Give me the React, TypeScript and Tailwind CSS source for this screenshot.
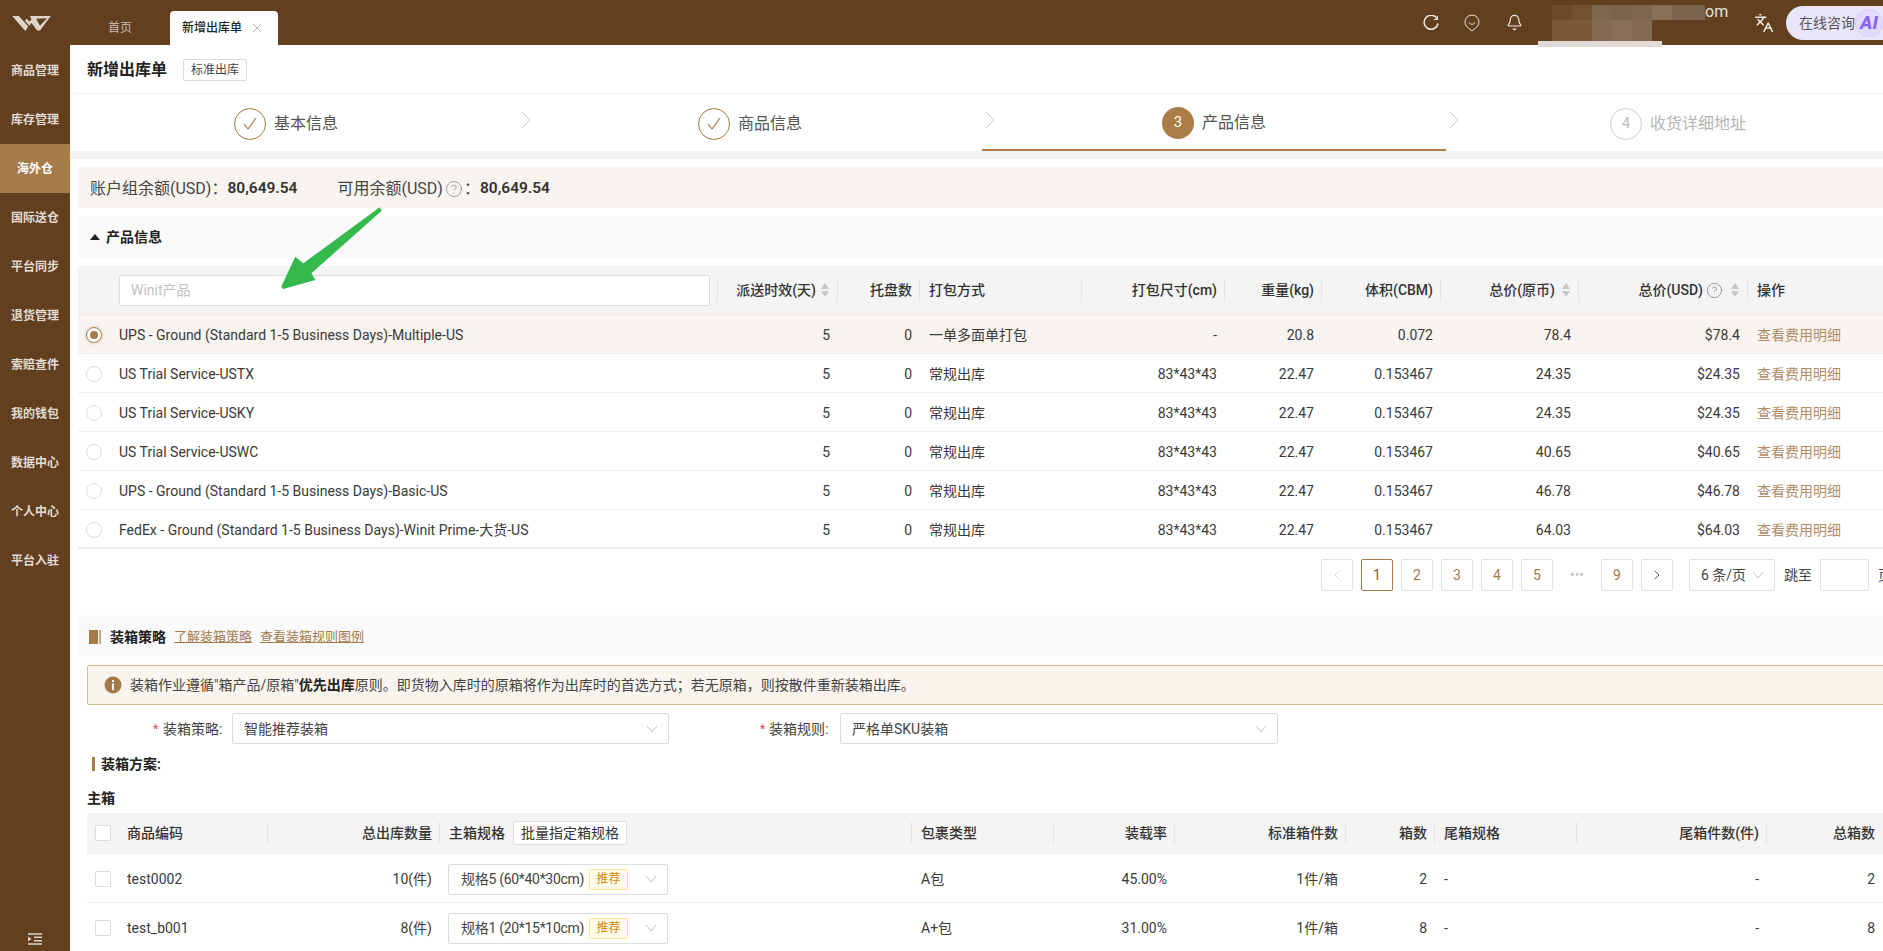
import React from "react";
import { Bell, CircleHelp, Languages, X, ChevronLeft, ChevronRight } from "lucide-react";

const font = "font-['Roboto','Noto_Sans_CJK_SC',sans-serif]";
const menu = ["商品管理", "库存管理", "海外仓", "国际送仓", "平台同步", "退货管理", "索赔查件", "我的钱包", "数据中心", "个人中心", "平台入驻"];

function Sort() {
  return (
    <svg width="8" height="14" viewBox="0 0 8 14" className="shrink-0">
      <path d="M4 0 8 6H0Z" fill="#c8c8c8" />
      <path d="M4 14 0 8h8Z" fill="#c8c8c8" />
    </svg>
  );
}

function Chevron({ className = "" }: { className?: string }) {
  return (
    <svg width="12" height="8" viewBox="0 0 12 8" fill="none" className={className}>
      <path d="M1 1l5 6 5-6" stroke="#c4c4c4" strokeWidth="1" />
    </svg>
  );
}

function Step({ n, label, state, first }: { n: number; label: string; state: "done" | "active" | "todo"; first?: boolean }) {
  return (
    <div className={`relative flex items-center justify-center gap-2 ${first ? "pr-4" : ""} ${state === "active" ? "border-b-2 border-[#b07d45] pt-[2px]" : "pt-[2px]"}`}>
      {state === "done" && (
        <span className="flex h-8 w-8 items-center justify-center rounded-full border border-[#a57a4a]">
          <svg width="16" height="14" viewBox="0 0 16 14" fill="none"><path d="M2 7l4 5 8-11" stroke="#a57a4a" strokeWidth="1.2" /></svg>
        </span>
      )}
      {state === "active" && <span className="flex h-8 w-8 items-center justify-center rounded-full bg-[#ab7d48] text-[15px] text-white">{n}</span>}
      {state === "todo" && <span className="flex h-8 w-8 items-center justify-center rounded-full border border-[#cfcfcf] text-[15px] text-[#bdbdbd]">{n}</span>}
      <span className={`text-base ${state === "todo" ? "text-[#b5b5b5]" : "text-[#555]"}`}>{label}</span>
      {n < 4 && (
        <svg width="10" height="18" viewBox="0 0 10 18" fill="none" className="absolute right-[-13px] top-[17px]">
          <path d="M1 1l8 8-8 8" stroke="#c8c8c8" strokeWidth="1" />
        </svg>
      )}
    </div>
  );
}

const hcell = "relative flex items-center px-2 after:absolute after:right-0 after:top-[13px] after:bottom-[12px] after:w-px after:bg-[#e4e4e4]";
const hcell2 = "relative flex items-center px-2 after:absolute after:right-0 after:top-[9px] after:bottom-[9px] after:w-px after:bg-[#e4e4e4]";
const grid1 = "grid grid-cols-[640px_120px_82px_162px_143px_97px_119px_138px_169px_135px]";
const grid2 = "grid grid-cols-[181px_172px_472px_142px_121px_171px_89px_142px_190px_116px]";

const rows = [
  ["UPS - Ground (Standard 1-5 Business Days)-Multiple-US", "一单多面单打包", "-", "20.8", "0.072", "78.4", "$78.4"],
  ["US Trial Service-USTX", "常规出库", "83*43*43", "22.47", "0.153467", "24.35", "$24.35"],
  ["US Trial Service-USKY", "常规出库", "83*43*43", "22.47", "0.153467", "24.35", "$24.35"],
  ["US Trial Service-USWC", "常规出库", "83*43*43", "22.47", "0.153467", "40.65", "$40.65"],
  ["UPS - Ground (Standard 1-5 Business Days)-Basic-US", "常规出库", "83*43*43", "22.47", "0.153467", "46.78", "$46.78"],
  ["FedEx - Ground (Standard 1-5 Business Days)-Winit Prime-大货-US", "常规出库", "83*43*43", "22.47", "0.153467", "64.03", "$64.03"],
];

const boxes = [
  ["test0002", "10(件)", "规格5 (60*40*30cm)", "A包", "45.00%", "2"],
  ["test_b001", "8(件)", "规格1 (20*15*10cm)", "A+包", "31.00%", "8"],
];

function PageBtn({ children, active, link }: { children: React.ReactNode; active?: boolean; link?: boolean }) {
  return (
    <span className={`flex h-8 w-8 items-center justify-center rounded-[2px] border text-sm ${active ? "border-[#a57a4a] text-[#8a5f30]" : "border-[#e2e2e2]"} ${link ? "text-[#a57a4a]" : ""}`}>{children}</span>
  );
}

function Select({ className, children }: { className: string; children: React.ReactNode }) {
  return (
    <div className={`flex h-[31px] items-center justify-between rounded-[2px] border border-[#dcdcdc] bg-white pr-[10px] text-sm text-[#444] ${className}`}>
      {children}
      <Chevron />
    </div>
  );
}

export default function App() {
  return (
    <div className={`relative flex h-[951px] w-full overflow-hidden bg-white text-sm text-[#3a3a3a] ${font}`}>
      <aside className="flex h-full w-[70px] shrink-0 flex-col bg-[#613f1f]">
        <div className="flex h-[46px] shrink-0 items-center justify-center pr-[7px]">
          <svg width="41" height="16" viewBox="0 0 41 17" fill="none">
            <path d="M0 1H7L17 12 14.500 16.500H13.500Z" fill="#ded5cb" />
            <path fillRule="evenodd" clipRule="evenodd" d="M19 1H41L29.500 16.500H26.500L20.500 8.500 18.300 11.500 13.500 6 15.500 4 18 7 20.500 5ZM25.500 4 29.500 11.500 37 3.500Z" fill="#ded5cb" />
          </svg>
        </div>
        {menu.map((m) => (
          <div key={m} className={`flex h-[49px] shrink-0 items-center justify-center text-xs font-semibold ${m === "海外仓" ? "bg-[#a67c4b] text-white" : "text-[#e2dbd3]"}`}>{m}</div>
        ))}
        <div className="mt-auto flex justify-center pb-[6px]">
          <svg width="14" height="12" viewBox="0 0 14 12" fill="none">
            <path d="M0 1h14M6 4.300h8M6 7.700h8M0 11h14" stroke="#ddd6ce" strokeWidth="1.500" />
            <path d="M0 3.500 3.500 6 0 8.500Z" fill="#ddd6ce" />
          </svg>
        </div>
      </aside>

      <div className="flex min-w-0 flex-1 flex-col">
        <header className="flex h-[45px] shrink-0 items-end bg-[#613f1f]">
          <div className="flex h-[34px] w-[100px] items-center justify-center text-xs text-[#c9bcae]">首页</div>
          <div className="flex h-[34px] w-[108px] items-center justify-between rounded-t-[4px] bg-white pl-3 pr-[14px] text-xs font-medium text-[#222]">
            新增出库单
            <X size={14} strokeWidth={1} className="text-[#777]" />
          </div>
          <div className="flex h-[45px] flex-1 items-center justify-end">
            <svg width="16" height="16" viewBox="0 0 16 16" fill="none" className="mr-[25px]">
              <path d="M14.200 3.800A7 7 0 1 0 15 8.500" stroke="#efe8e0" strokeWidth="1.500" />
              <path d="M14.500 1v3.500H11" stroke="#efe8e0" strokeWidth="1" />
            </svg>
            <svg width="16" height="18" viewBox="0 0 16 18" fill="none" className="mr-[26px]">
              <path d="M8 17 4.800 14.300A7 7 0 1 1 11.200 14.300Z" stroke="#e8e0d8" strokeWidth="1" />
              <path d="M5 8.500c1 2.200 5 2.200 6 0" stroke="#e8e0d8" strokeWidth="1" />
            </svg>
            <Bell size={17} strokeWidth={1.600} className="mr-[15px] text-[#f2ece6]" />
            <div className="relative mr-[36px] h-[45px] w-[180px]">
              <div className="absolute left-[14px] top-[5px] grid grid-cols-[20px_20px_20px_20px_20px_20px_33px] grid-rows-[15px_21px]">
                <span className="bg-[#6d4a28]" /><span className="bg-[#72512f]" /><span className="bg-[#7d6650]" /><span className="bg-[#7a644f]" /><span className="bg-[#7e6750]" /><span className="bg-[#886f58]" /><span className="bg-[#7b6450]" />
                <span className="bg-[#7d5a37]" /><span className="bg-[#7a5a39]" /><span className="bg-[#836a52]" /><span className="bg-[#866e58]" /><span className="bg-[#846a52]" />
              </div>
              <div className="absolute left-0 top-[41px] h-[6px] w-[124px] bg-[#dfdad6]" />
              <span className="absolute left-[167px] top-[2px] text-base leading-5 text-[#e8e0d8]">om</span>
            </div>
            <Languages size={20} strokeWidth={1.800} className="mr-[12px] text-[#f2ece6]" />
            <div className="relative -mr-[24px] flex h-[34px] w-[121px] items-center rounded-full bg-[#e8e5fb] pl-[13px] text-sm text-[#555]">
              在线咨询
              <span className="absolute left-[69px] top-[3px] h-7 w-7 rounded-full border border-[#dccdf6] bg-[#e2dbf9]" />
              <span className="relative ml-[5px] text-[19px] font-extrabold italic leading-none text-[#8a63ef]">AI</span>
            </div>
          </div>
        </header>

        <main className="min-h-0 flex-1 overflow-hidden">
          <div className="flex h-[49px] items-center border-b border-[#eeeeee] pl-[17px]">
            <span className="mt-[2px] text-base font-semibold text-[#222]">新增出库单</span>
            <span className="ml-4 mt-px flex h-[22px] w-[64px] items-center justify-center rounded-[2px] border border-[#dcdcdc] text-xs text-[#444]">标准出库</span>
          </div>
          <div className="grid h-[57px] grid-cols-[448px_464px_464px_464px]">
            <Step n={1} label="基本信息" state="done" first />
            <Step n={2} label="商品信息" state="done" />
            <Step n={3} label="产品信息" state="active" />
            <Step n={4} label="收货详细地址" state="todo" />
          </div>
          <div className="h-2 bg-[#f2f2f2]" />

          <div className="pl-2">
            <div className="mt-2 flex h-[41px] items-center bg-[#f9f4ef] pl-3 pt-[2px] text-base text-[#444]">
              账户组余额(USD)：<span className="text-[15.500px] font-semibold text-[#333]">80,649.54</span>
              <span className="ml-[40px]">可用余额(USD)</span>
              <CircleHelp size={18} strokeWidth={1} className="ml-[2px] text-[#888]" />
              <span className="ml-[1px]">：</span>
              <span className="text-[15.500px] font-semibold text-[#333]">80,649.54</span>
            </div>

            <div className="mt-2 flex h-[42px] items-center bg-[#fafafa] pl-3 font-semibold text-[#222]">
              <svg width="10" height="6" viewBox="0 0 10 6" className="mr-[6px]"><path d="M5 0l5 6H0Z" fill="#222" /></svg>
              产品信息
            </div>

            <div className="mt-2">
              <div className={`${grid1} h-[49px] border-b border-[#eeeeee] bg-[#f4f4f4] font-medium text-[#333]`}>
                <div className={`${hcell} pl-[41px] pr-[8px]`}>
                  <div className="flex h-[31px] w-full items-center rounded-[2px] border border-[#dcdcdc] bg-white px-[11px] font-normal text-[#bfbfbf]">Winit产品</div>
                </div>
                <div className={`${hcell} justify-end gap-[5px] pr-[9px]`}>派送时效(天)<Sort /></div>
                <div className={`${hcell} justify-end`}>托盘数</div>
                <div className={`${hcell} pl-[9px]`}>打包方式</div>
                <div className={`${hcell} justify-end`}>打包尺寸(cm)</div>
                <div className={`${hcell} justify-end`}>重量(kg)</div>
                <div className={`${hcell} justify-end`}>体积(CBM)</div>
                <div className={`${hcell} justify-end gap-[7px] pr-[9px]`}>总价(原币)<Sort /></div>
                <div className={`${hcell} justify-end pr-[9px]`}>
                  总价(USD)
                  <CircleHelp size={17} strokeWidth={1} className="ml-[3px] text-[#777]" />
                  <span className="ml-[8px]"><Sort /></span>
                </div>
                <div className="flex items-center pl-[9px]">操作</div>
              </div>
              {rows.map((r, i) => (
                <div key={r[0]} className={`${grid1} h-[39px] items-center border-b border-[#eeeeee] pt-[2px] ${i === 0 ? "bg-[#f9f4ef]" : ""} ${i === 5 ? "border-b-2" : ""}`}>
                  <div className="flex items-center pl-2">
                    {i === 0 ? (
                      <span className="flex h-4 w-4 items-center justify-center rounded-full border border-[#a57a4a] bg-white shadow-[0_0_0_2px_#f0e6dc]"><span className="h-2 w-2 rounded-full bg-[#a57a4a]" /></span>
                    ) : (
                      <span className="h-4 w-4 rounded-full border border-[#dcdcdc] bg-white" />
                    )}
                    <span className="ml-[17px]">{r[0]}</span>
                  </div>
                  <div className="px-2 text-right">5</div>
                  <div className="px-2 text-right">0</div>
                  <div className="px-2 pl-[9px]">{r[1]}</div>
                  <div className="px-2 text-right">{r[2]}</div>
                  <div className="px-2 text-right">{r[3]}</div>
                  <div className="px-2 text-right">{r[4]}</div>
                  <div className="px-2 text-right">{r[5]}</div>
                  <div className="px-2 text-right">{r[6]}</div>
                  <div className="pl-[9px] text-[#b08d68]">查看费用明细</div>
                </div>
              ))}
            </div>

            <div className="relative mt-[10px] flex h-8 w-[1860px] items-center pl-[1243px] text-[#a57a4a]">
              <div className="flex items-center gap-2">
                <PageBtn><ChevronLeft size={16} strokeWidth={1} className="text-[#c4c4c4]" /></PageBtn>
                <PageBtn active>1</PageBtn>
                <PageBtn link>2</PageBtn>
                <PageBtn link>3</PageBtn>
                <PageBtn link>4</PageBtn>
                <PageBtn link>5</PageBtn>
                <span className="flex w-8 justify-center text-[#c4c4c4]">•••</span>
                <PageBtn link>9</PageBtn>
                <PageBtn><ChevronRight size={16} strokeWidth={1.300} className="text-[#444]" /></PageBtn>
              </div>
              <div className="ml-4 flex h-8 w-[86px] items-center justify-between rounded-[2px] border border-[#e2e2e2] pl-[11px] pr-[10px] text-[#444]">6 条/页<Chevron /></div>
              <span className="ml-[9px] text-[#444]">跳至</span>
              <span className="ml-2 h-8 w-[49px] rounded-[2px] border border-[#e2e2e2]" />
              <span className="ml-[9px] text-[#444]">页</span>
            </div>

            <div className="mt-6 flex h-[42px] items-center bg-[#fafafa] pl-[11px] pt-[2px]">
              <svg width="12" height="14" viewBox="0 0 12 14" className="mr-[9px]"><path d="M0 0h9v14H0Z" fill="#a57a4a" /><path d="M10 0h2v14h-2Z" fill="#c7a988" /></svg>
              <span className="font-semibold text-[#222]">装箱策略</span>
              <a className="ml-2 text-[13px] text-[#a57a4a] underline">了解装箱策略</a>
              <a className="ml-2 text-[13px] text-[#a57a4a] underline">查看装箱规则图例</a>
            </div>

            <div className="ml-[9px] mt-2 flex h-[40px] w-[1850px] items-center rounded-[2px] border border-[#dbb98f] bg-[#faf4ef] pl-4">
              <svg width="18" height="18" viewBox="0 0 18 18" className="mr-2"><circle cx="9" cy="9" r="8.500" fill="#a57a4a" /><path d="M8 7.500h2V14H8Z M8 4h2v2H8Z" fill="#fff" /></svg>
              <span className="text-sm text-[#444]">装箱作业遵循"箱产品/原箱"<b className="font-semibold text-[#222]">优先出库</b>原则。即货物入库时的原箱将作为出库时的首选方式；若无原箱，则按散件重新装箱出库。</span>
            </div>

            <div className="mt-2 flex items-center">
              <span className="ml-[75px] w-[10px] text-xs text-[#e5484d]">*</span>
              <span className="w-[69px] text-[#444]">装箱策略:</span>
              <Select className="w-[437px] pl-[11px]">智能推荐装箱</Select>
              <span className="ml-[91px] w-[9px] text-xs text-[#e5484d]">*</span>
              <span className="w-[71px] text-[#444]">装箱规则:</span>
              <Select className="w-[438px] pl-[11px]">严格单SKU装箱</Select>
            </div>

            <div className="ml-[9px] mt-[13px] flex h-[14px] items-center pl-[5px] font-semibold text-[#222]">
              <span className="mr-[6px] h-[14px] w-[3px] bg-[#a57a4a]" />装箱方案:
            </div>
            <div className="ml-[9px] mt-[17px] h-5 leading-5 font-semibold text-[#222]">主箱</div>

            <div className="ml-[9px] mt-[5px]">
              <div className={`${grid2} h-[41px] border-b border-[#eeeeee] bg-[#f4f4f4] font-medium text-[#333]`}>
                <div className={`${hcell2} pl-2`}>
                  <span className="h-4 w-4 rounded-[2px] border border-[#dcdcdc] bg-white" />
                  <span className="ml-4">商品编码</span>
                </div>
                <div className={`${hcell2} justify-end`}>总出库数量</div>
                <div className={`${hcell2} pl-[9px]`}>
                  主箱规格
                  <span className="ml-2 flex h-6 w-[114px] items-center justify-center rounded-[2px] border border-[#dcdcdc] bg-white font-normal">批量指定箱规格</span>
                </div>
                <div className={`${hcell2} pl-[9px]`}>包裹类型</div>
                <div className={`${hcell2} justify-end`}>装载率</div>
                <div className={`${hcell2} justify-end`}>标准箱件数</div>
                <div className={`${hcell2} justify-end`}>箱数</div>
                <div className={`${hcell2} pl-[9px]`}>尾箱规格</div>
                <div className={`${hcell2} justify-end`}>尾箱件数(件)</div>
                <div className="flex items-center justify-end px-2">总箱数</div>
              </div>
              {boxes.map((b) => (
                <div key={b[0]} className={`${grid2} h-[49px] items-center border-b border-[#eeeeee] pt-[2px]`}>
                  <div className="flex items-center pl-2">
                    <span className="h-4 w-4 rounded-[2px] border border-[#dcdcdc]" />
                    <span className="ml-4">{b[0]}</span>
                  </div>
                  <div className="px-2 text-right">{b[1]}</div>
                  <div className="pl-2">
                    <Select className="w-[220px] pl-3">
                      <span className="flex items-center">
                        <span className="tracking-[-0.3px]">{b[2]}</span>
                        <span className="ml-[5px] flex h-[21px] w-[39px] items-center justify-center rounded-[2px] border border-[#ffe58f] bg-[#fffbe6] text-xs text-[#d48806]">推荐</span>
                      </span>
                    </Select>
                  </div>
                  <div className="pl-[9px]">{b[3]}</div>
                  <div className="px-2 text-right">{b[4]}</div>
                  <div className="px-2 text-right">1件/箱</div>
                  <div className="px-2 text-right">{b[5]}</div>
                  <div className="pl-[9px]">-</div>
                  <div className="px-2 text-right">-</div>
                  <div className="px-2 text-right">{b[5]}</div>
                </div>
              ))}
            </div>
          </div>
        </main>
      </div>

      <svg width="110" height="90" viewBox="0 0 110 90" className="pointer-events-none absolute left-[278px] top-[204px]">
        <path d="M101.700 3.300 103.700 6.700 33.400 69.300 37.400 76 5.200 85 3.200 82.700 17.300 52.700 25.300 59.300Z" fill="#36b94c" />
      </svg>
    </div>
  );
}
